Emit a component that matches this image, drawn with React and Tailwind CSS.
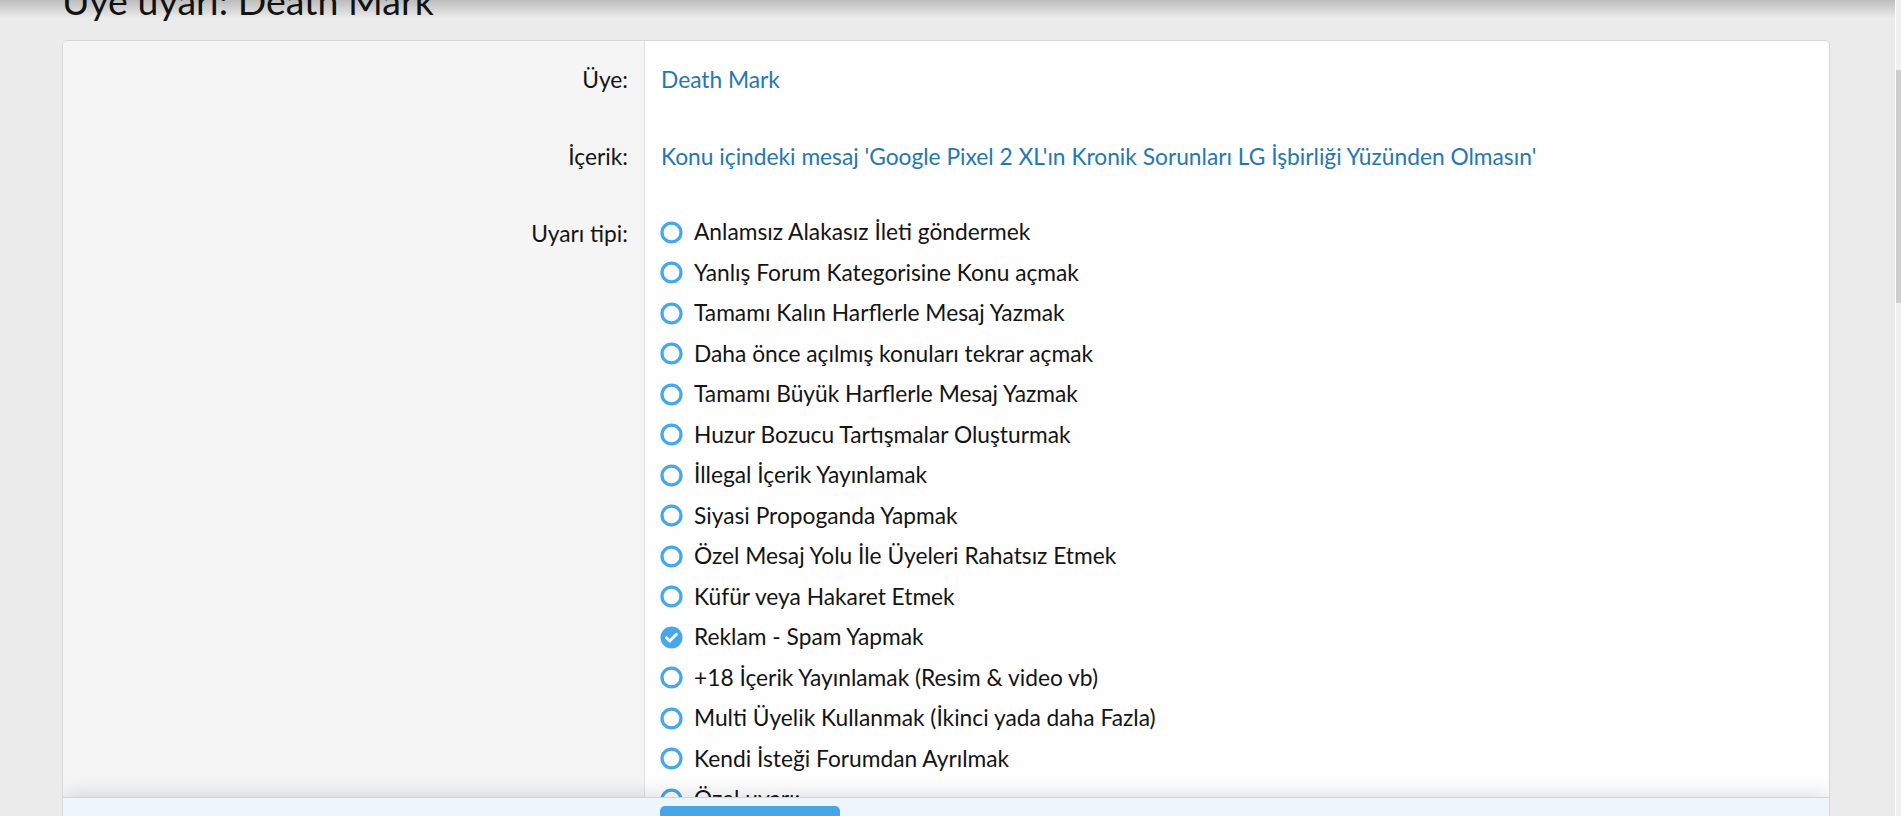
import React from 'react';

const warnings = [
  'Anlamsız Alakasız İleti göndermek',
  'Yanlış Forum Kategorisine Konu açmak',
  'Tamamı Kalın Harflerle Mesaj Yazmak',
  'Daha önce açılmış konuları tekrar açmak',
  'Tamamı Büyük Harflerle Mesaj Yazmak',
  'Huzur Bozucu Tartışmalar Oluşturmak',
  'İllegal İçerik Yayınlamak',
  'Siyasi Propoganda Yapmak',
  'Özel Mesaj Yolu İle Üyeleri Rahatsız Etmek',
  'Küfür veya Hakaret Etmek',
  'Reklam - Spam Yapmak',
  '+18 İçerik Yayınlamak (Resim & video vb)',
  'Multi Üyelik Kullanmak (İkinci yada daha Fazla)',
  'Kendi İsteği Forumdan Ayrılmak',
  'Özel uyarı:',
];

function RadioIcon({ checked }) {
  if (checked) {
    return (
      <svg width="23" height="23" viewBox="0 0 24 24" className="shrink-0">
        <circle cx="12" cy="12" r="11.5" fill="#47a7eb" />
        <path d="M6.8 12.3l3.4 3.4 7-7" fill="none" stroke="#fff" strokeWidth="3" strokeLinecap="round" strokeLinejoin="round" />
      </svg>
    );
  }
  return (
    <svg width="23" height="23" viewBox="0 0 24 24" className="shrink-0">
      <circle cx="12" cy="12" r="9.9" fill="none" stroke="#47a7eb" strokeWidth="3.4" />
    </svg>
  );
}

function Row({ label, children }) {
  return (
    <div className="flex">
      <div className="w-[582px] shrink-0 bg-[#f5f5f5] border-r border-[#e2e2e2] text-right pr-[16px] py-[22.75px]">
        {label}
      </div>
      <div className="flex-1 pl-[16px] py-[22.75px]">{children}</div>
    </div>
  );
}

export default function App() {
  return (
    <div className="flex h-[816px] w-full overflow-hidden bg-[#ebebeb] font-['Lato',sans-serif] text-[#141414] text-[22.75px] leading-[31.5px]">
      <div className="relative flex-1 flex flex-col overflow-hidden">
        {/* shadow of the sticky header above the viewport */}
        <div className="absolute top-0 left-0 right-0 h-[18px] bg-gradient-to-b from-black/20 to-transparent z-20" />

        <div className="h-[40px] shrink-0 pl-[62px]">
          <h1 className="text-[37.5px] leading-[37.5px] font-normal -mt-[18px]">Üye uyarı: Death Mark</h1>
        </div>

        <div className="ml-[62px] w-[1768px] shrink-0 flex flex-col border border-[#d8d8d8] rounded-t-[5px] overflow-hidden bg-[#fefefe]">
          <div className="h-[756px] shrink-0 overflow-hidden flex flex-col">
            <Row label="Üye:">
              <a href="#" className="text-[#2577b1]">Death Mark</a>
            </Row>
            <Row label="İçerik:">
              <a href="#" className="text-[#2577b1]">
                Konu içindeki mesaj 'Google Pixel 2 XL'ın Kronik Sorunları LG İşbirliği Yüzünden Olmasın'
              </a>
            </Row>
            <div className="flex flex-1">
              <div className="w-[582px] shrink-0 bg-[#f5f5f5] border-r border-[#e2e2e2] text-right pr-[16px] pt-[22.75px]">
                Uyarı tipi:
              </div>
              <ul className="flex-1 pl-[15px] pt-[16.75px]">
                {warnings.map((w, i) => (
                  <li key={w} className="h-[40.5px] flex items-center gap-[11px]">
                    <RadioIcon checked={i === 10} />
                    <span>{w}</span>
                  </li>
                ))}
              </ul>
            </div>
          </div>

          <div className="relative z-10 h-[60px] shrink-0 bg-[#edf6fd] border-t border-[#d5d5d5] shadow-[0_0_22px_rgba(0,0,0,0.16)] pl-[597px] pt-[8px]">
            <button className="w-[180px] h-[44px] rounded-[5px] bg-[#47a6e8] text-white text-[22.75px]">Uyar</button>
          </div>
        </div>
      </div>

      {/* scrollbar */}
      <div className="w-[6px] shrink-0 border-l border-white bg-[#f0f0f0] pt-[70px]">
        <div className="h-[233px] bg-[#cdcdcd]" />
      </div>
    </div>
  );
}
